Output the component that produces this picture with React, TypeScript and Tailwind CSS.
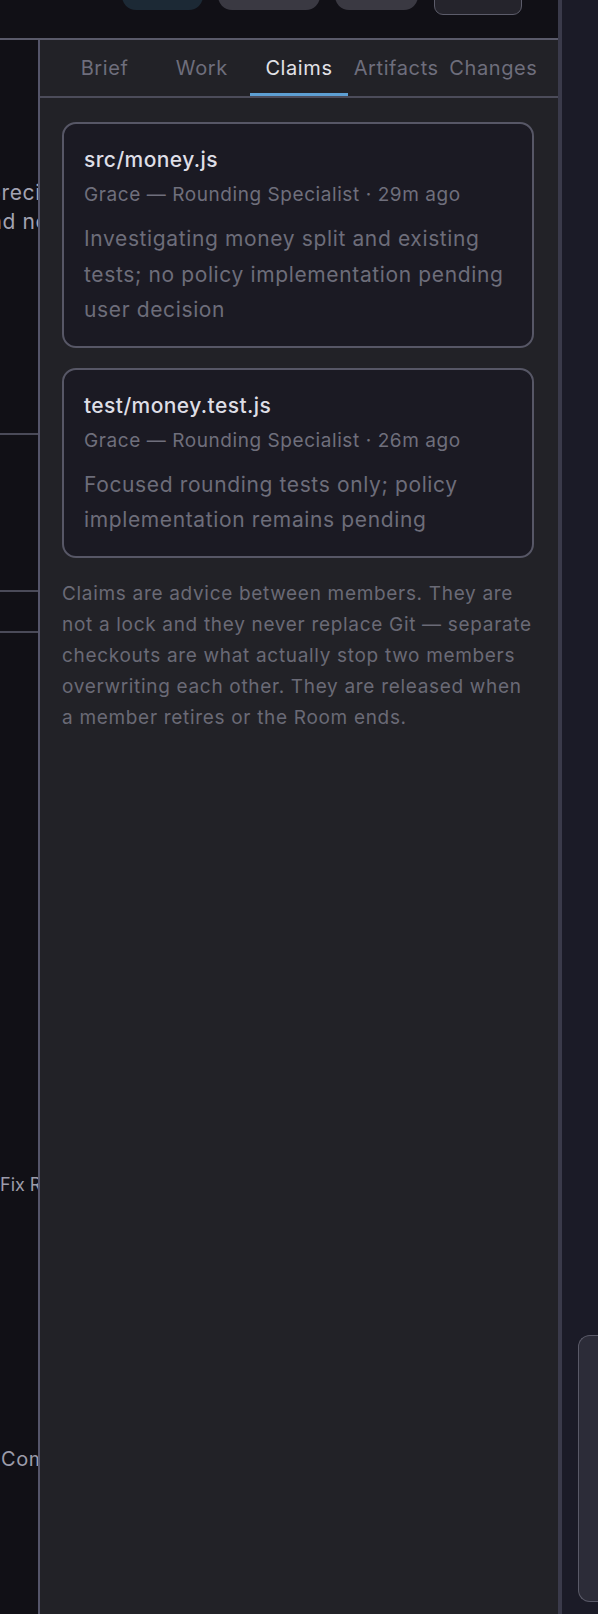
import React from 'react';

const tabs = ['Brief', 'Work', 'Claims', 'Artifacts', 'Changes'];

const claims = [
  {
    path: 'src/money.js',
    who: 'Grace — Rounding Specialist',
    when: '29m ago',
    note: 'Investigating money split and existing tests; no policy implementation pending user decision',
  },
  {
    path: 'test/money.test.js',
    who: 'Grace — Rounding Specialist',
    when: '26m ago',
    note: 'Focused rounding tests only; policy implementation remains pending',
  },
];

const ClaimCard: React.FC<{ claim: (typeof claims)[number] }> = ({ claim }) => (
  <div className="rounded-[14px] border-2 border-[#575766] bg-[#1b1a23] px-[20px] pt-[22px] pb-[18px]">
    <p className="text-[21px] leading-[28px] font-medium tracking-[0.02em] text-[#dedee6]">{claim.path}</p>
    <p className="mt-[8px] text-[19px] leading-[26px] tracking-[0.03em] text-[#6f6f7c]">
      {claim.who} · {claim.when}
    </p>
    <p className="mt-[13px] text-[21px] leading-[35.5px] tracking-[0.03em] text-[#6d6d7a]">{claim.note}</p>
  </div>
);

export default function App() {
  return (
    <div className="flex h-[1614px] w-[598px] overflow-hidden bg-[#111016] font-['Inter','Noto_Sans',sans-serif]">
      <div className="flex w-[558px] flex-col">
        {/* top bar, buttons are cut off by the viewport */}
        <div className="flex h-[40px] shrink-0 items-start gap-[15px] overflow-hidden border-b-2 border-[#5a5a6a] pl-[122px]">
          <div className="-mt-[24px] h-[34px] w-[81px] rounded-[14px] bg-[#1c2935]" />
          <div className="-mt-[24px] h-[34px] w-[102px] rounded-[14px] bg-[#3a3942]" />
          <div className="-mt-[24px] h-[34px] w-[83px] rounded-[14px] bg-[#3a3942]" />
          <div className="-mt-[19px] ml-px h-[34px] w-[88px] rounded-[9px] border-[1.5px] border-[#5c5c6a] bg-[#25242c]" />
        </div>

        <div className="flex flex-1">
          {/* left column, mostly hidden */}
          <div className="flex w-[38px] shrink-0 flex-col overflow-hidden text-[#a3a3b2]">
            <div className="h-[395px] shrink-0 border-b-2 border-[#4a4a58] pt-[138px] text-[21px] leading-[29px] tracking-[0.03em] whitespace-nowrap">
              <p className="-ml-[12px]">precision</p>
              <p className="-ml-[23px]">and no</p>
            </div>
            <div className="h-[157px] shrink-0 border-b-2 border-[#4a4a58]" />
            <div className="h-[41px] shrink-0 border-b-2 border-[#4a4a58]" />
            <div className="flex-1 pt-[538px] text-[18px] leading-[28px] whitespace-nowrap text-[#9c9caa]">
              <p>Fix Rounding</p>
              <p className="mt-[246px] ml-px text-[20px] tracking-[0.03em]">Complete</p>
            </div>
          </div>

          {/* detail panel */}
          <div className="flex flex-1 flex-col border-l-2 border-[#55556a] bg-[#222227]">
            <div className="flex h-[58px] shrink-0 border-b-2 border-[#4c4c5a] px-4">
              {tabs.map((t) => (
                <div
                  key={t}
                  className={`relative flex flex-1 items-center justify-center text-[20px] tracking-[0.03em] whitespace-nowrap ${
                    t === 'Claims' ? 'text-[#e2e2e8]' : 'text-[#6e6e7c]'
                  }`}
                >
                  {t}
                  {t === 'Claims' && <span className="absolute right-0 bottom-0 left-0 h-[3px] bg-[#5d9fd3]" />}
                </div>
              ))}
            </div>

            <div className="flex flex-col gap-5 pt-[24px] pr-[24px] pl-[22px]">
              {claims.map((c) => (
                <ClaimCard key={c.path} claim={c} />
              ))}
              <p className="text-[19px] leading-[31px] tracking-[0.036em] text-[#6a6a76]">
                Claims are advice between members. They are not a lock and they never replace Git — separate
                checkouts are what actually stop two members overwriting each other. They are released when a
                member retires or the Room ends.
              </p>
            </div>
          </div>
        </div>
      </div>

      {/* right column */}
      <div className="flex flex-1 flex-col border-l-4 border-[#3a3a4a] bg-[#1b1b27] pt-[1335px] pl-[16px]">
        <div className="h-[267px] rounded-l-[12px] border-[1.5px] border-r-0 border-[#5a5a68] bg-[#2c2c38]" />
      </div>
    </div>
  );
}
